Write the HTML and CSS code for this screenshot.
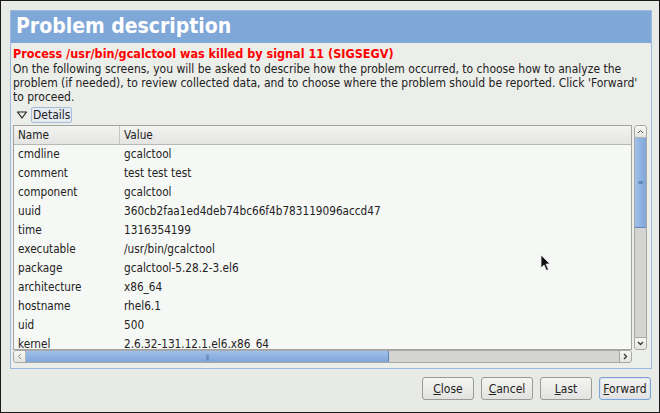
FILE: index.html
```html
<!DOCTYPE html>
<html>
<head>
<meta charset="utf-8">
<link rel="stylesheet" href="styles.css">
</head>
<body>
<div class="window">
  <div class="panel">
    <div class="title">Problem description</div>
    <div class="content">
      <div class="error">Process /usr/bin/gcalctool was killed by signal 11 (SIGSEGV)</div>
      <div class="desc">On the following screens, you will be asked to describe how the problem occurred, to choose how to analyze the problem (if needed), to review collected data, and to choose where the problem should be reported. Click 'Forward' to proceed.</div>
      <div class="expander">
        <svg class="tri" width="12" height="10" viewBox="0 0 12 10"><path d="M1.5 2 L10.5 2 L6 8 Z" fill="none" stroke="#222" stroke-width="1.2" stroke-linejoin="round"/></svg>
        <span class="exp-label">Details</span>
      </div>
      <div class="treebox">
        <div class="tree">
          <div class="thead">
            <div class="c1 hcell">Name</div>
            <div class="c2 hcell">Value</div>
          </div>
          <div class="row"><div class="c1">cmdline</div><div class="c2">gcalctool</div></div>
          <div class="row"><div class="c1">comment</div><div class="c2">test test test</div></div>
          <div class="row"><div class="c1">component</div><div class="c2">gcalctool</div></div>
          <div class="row"><div class="c1">uuid</div><div class="c2">360cb2faa1ed4deb74bc66f4b783119096accd47</div></div>
          <div class="row"><div class="c1">time</div><div class="c2">1316354199</div></div>
          <div class="row"><div class="c1">executable</div><div class="c2">/usr/bin/gcalctool</div></div>
          <div class="row"><div class="c1">package</div><div class="c2">gcalctool-5.28.2-3.el6</div></div>
          <div class="row"><div class="c1">architecture</div><div class="c2">x86_64</div></div>
          <div class="row"><div class="c1">hostname</div><div class="c2">rhel6.1</div></div>
          <div class="row"><div class="c1">uid</div><div class="c2">500</div></div>
          <div class="row"><div class="c1">kernel</div><div class="c2">2.6.32-131.12.1.el6.x86_64</div></div>
        </div>
        <div class="vscroll">
          <div class="sbtn up"><svg width="7" height="5" viewBox="0 0 7 5"><path d="M1 4 L3.5 1.5 L6 4" fill="none" stroke="#555" stroke-width="1"/></svg></div>
          <div class="vthumb"><span class="grip">≡</span></div>
          <div class="vtrack"></div>
          <div class="sbtn down"><svg width="7" height="5" viewBox="0 0 7 5"><path d="M1 1 L3.5 3.5 L6 1" fill="none" stroke="#333" stroke-width="1.3"/></svg></div>
        </div>
        <div class="hscroll">
          <div class="hbtn left"><svg width="5" height="7" viewBox="0 0 5 7"><path d="M4 1 L1.5 3.5 L4 6" fill="none" stroke="#888" stroke-width="1"/></svg></div>
          <div class="hthumb"><span class="hgrip">|||</span></div>
          <div class="htrack"></div>
          <div class="hbtn right"><svg width="5" height="7" viewBox="0 0 5 7"><path d="M1 1 L3.5 3.5 L1 6" fill="none" stroke="#333" stroke-width="1.3"/></svg></div>
        </div>
        <div class="corner"></div>
      </div>
    </div>
  </div>
  <div class="buttons">
    <button class="btn"><u>C</u>lose</button>
    <button class="btn"><u>C</u>ancel</button>
    <button class="btn"><u>L</u>ast</button>
    <button class="btn focus"><u>F</u>orward</button>
  </div>
  <svg class="cursor" width="12" height="18" viewBox="0 0 12 18"><path d="M1 1 L1 14 L4 11 L6.5 16.5 L8.5 15.5 L6 10 L10 10 Z" fill="#111" stroke="#eee" stroke-width="0.8"/></svg>
</div>
</body>
</html>
```

FILE: styles.css
```css
* { box-sizing: border-box; }
html, body { margin: 0; padding: 0; }
body {
  width: 660px;
  height: 413px;
  overflow: hidden;
  font-family: "DejaVu Sans Condensed", "DejaVu Sans", sans-serif;
  font-stretch: condensed;
  font-size: 12px;
  color: #222;
}
.window {
  position: relative;
  width: 660px;
  height: 413px;
  background: #e8eae6;
  border: 1px solid #1a1a1a;
  padding: 9px 7px 0 9px;
}
.panel {
  height: 359px;
  border: 1px solid #9db9e0;
  background: #eceeea;
  display: flex;
  flex-direction: column;
}
.title {
  height: 32px;
  background: #7fa7d8;
  color: #fff;
  font-weight: bold;
  font-size: 21px;
  line-height: 31px;
  padding-left: 5px;
  flex: none;
}
.content {
  padding: 3px 2px 0 2px;
  display: flex;
  flex-direction: column;
  flex: 1;
  min-height: 0;
}
.error {
  color: #f00;
  font-weight: bold;
  font-size: 12.5px;
  line-height: 16px;
}
.desc {
  line-height: 14px;
  margin-top: 0;
}
.expander {
  display: flex;
  align-items: center;
  height: 17px;
  margin-top: 2px;
  padding-left: 3px;
}
.tri { margin-right: 3px; }
.exp-label {
  border: 1px solid #a7bcd9;
  background: #e6ebf2;
  border-radius: 2px;
  padding: 0 1px;
  line-height: 14px;
}
.treebox {
  margin-top: 2px;
  display: grid;
  grid-template-columns: 619px 13px;
  grid-template-rows: 225px 13px;
  column-gap: 2px;
}
.tree {
  border: 1px solid #a3a3a1;
  background: #f6f8f5;
  overflow: hidden;
  font-size: 11.7px;
}
.thead {
  display: flex;
  height: 19px;
  background: linear-gradient(#f3f4f1, #e4e5e2);
  border-bottom: 1px solid #b8b8b6;
  line-height: 18px;
}
.hcell.c1 { border-right: 1px solid #c4c4c2; }
.c1 { width: 106px; padding-left: 4px; flex: none; }
.c2 { padding-left: 4px; white-space: nowrap; }
.row {
  display: flex;
  height: 19px;
  line-height: 19px;
}
.vscroll {
  display: flex;
  flex-direction: column;
  border: 1px solid #a8a8a6;
  border-radius: 3px;
  background: #d4d5d2;
  overflow: hidden;
}
.sbtn {
  height: 12px;
  flex: none;
  background: linear-gradient(#f7f7f5, #e3e3e1);
  display: flex;
  align-items: center;
  justify-content: center;
}
.sbtn.up { border-bottom: 1px solid #b5b5b3; }
.sbtn.down { border-top: 1px solid #a8a8a6; }
.vthumb {
  height: 90px;
  flex: none;
  background: linear-gradient(90deg, #9fc0ea, #7fa6d9);
  border-bottom: 1px solid #5f87bd;
  display: flex;
  align-items: center;
  justify-content: center;
  color: #46689a;
  font-size: 8px;
}
.vtrack { flex: 1; }
.hscroll {
  display: flex;
  border: 1px solid #a8a8a6;
  border-radius: 3px;
  background: #d4d5d2;
  overflow: hidden;
}
.hbtn {
  width: 12px;
  flex: none;
  background: linear-gradient(#f7f7f5, #e3e3e1);
  display: flex;
  align-items: center;
  justify-content: center;
}
.hbtn.left { border-right: 1px solid #b5b5b3; }
.hbtn.right { border-left: 1px solid #a8a8a6; }
.hthumb {
  width: 363px;
  flex: none;
  background: linear-gradient(#9fc0ea, #7fa6d9);
  border-right: 1px solid #5f87bd;
  display: flex;
  align-items: center;
  justify-content: center;
  color: #46689a;
  font-size: 6px;
  letter-spacing: -1px;
}
.htrack { flex: 1; }
.buttons {
  display: flex;
  justify-content: flex-end;
  gap: 7px;
  padding: 8px 1px 0 0;
}
.btn {
  width: 52px;
  height: 23px;
  font-family: "DejaVu Sans Condensed", "DejaVu Sans", sans-serif;
  font-stretch: condensed;
  font-size: 12px;
  color: #222;
  border: 1px solid #9a9a98;
  border-radius: 3px;
  background: linear-gradient(#f4f4f2, #e2e2e0);
  padding: 0;
}
.btn.focus {
  border-color: #7fa3d3;
  box-shadow: inset 0 0 0 1px #d7e3f2;
}
.cursor {
  position: absolute;
  left: 539px;
  top: 253px;
}
```
